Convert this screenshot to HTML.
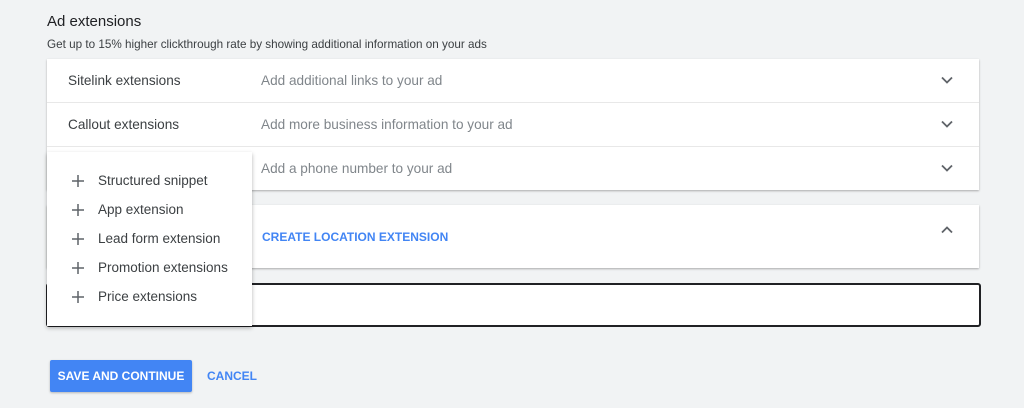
<!DOCTYPE html><html><head><style>
body{margin:0;width:1024px;height:408px;background:#f1f3f4;font-family:"Liberation Sans",sans-serif;position:relative;overflow:hidden}
.a{position:absolute}
.card{position:absolute;left:47px;width:932px;background:#fff;box-shadow:0 1px 2px rgba(0,0,0,.3)}
.row{position:absolute;left:0;width:932px;height:43px;border-bottom:1px solid #e8e8e8}
.l{position:absolute;left:21px;top:14px;font-size:13.6px;color:#3c4043}
.d{position:absolute;left:214px;top:14px;font-size:13.6px;color:#80868b}
.ch{position:absolute;left:894px;top:17px}
.mi{position:absolute;left:25px;font-size:13.5px;color:#3c4043}
.mi svg{position:absolute;left:-1px;top:1px}
.mi span{position:absolute;left:26px;white-space:nowrap}
</style></head><body>
<div class="a" style="left:47px;top:13px;font-size:15px;color:#202124">Ad extensions</div>
<div class="a" style="left:47px;top:38px;font-size:11.7px;color:#3c4043">Get up to 15% higher clickthrough rate by showing additional information on your ads</div>
<div class="card" style="top:59px;height:131px">
<div class="row" style="top:0"><div class="l">Sitelink extensions</div><div class="d">Add additional links to your ad</div><svg class="ch" width="12" height="8" viewBox="0 0 12 8"><path d="M1 1.5l5 5 5-5" fill="none" stroke="#5f6368" stroke-width="1.8"/></svg></div>
<div class="row" style="top:44px"><div class="l">Callout extensions</div><div class="d">Add more business information to your ad</div><svg class="ch" width="12" height="8" viewBox="0 0 12 8"><path d="M1 1.5l5 5 5-5" fill="none" stroke="#5f6368" stroke-width="1.8"/></svg></div>
<div class="row" style="top:88px;border:0"><div class="d">Add a phone number to your ad</div><svg class="ch" width="12" height="8" viewBox="0 0 12 8"><path d="M1 1.5l5 5 5-5" fill="none" stroke="#5f6368" stroke-width="1.8"/></svg></div>
</div>
<div class="card" style="top:205px;height:63px">
<div class="a" style="left:215px;top:25px;font-size:12px;font-weight:bold;color:#4285f4">CREATE LOCATION EXTENSION</div>
<svg class="a" style="left:894px;top:21px" width="12" height="8" viewBox="0 0 12 8"><path d="M1 6.5l5-5 5 5" fill="none" stroke="#5f6368" stroke-width="1.8"/></svg>
</div>
<div class="a" style="left:46px;top:283px;width:931px;height:40px;border:2px solid #202124;border-radius:3px;background:#fff"></div>
<div class="a" style="left:47px;top:152px;width:205px;height:174px;background:#fff;box-shadow:0 2px 4px rgba(0,0,0,.3)">
<div class="mi" style="top:21px"><svg width="14" height="14"><path d="M7 1v12M1 7h12" stroke="#5f6368" stroke-width="1.5"/></svg><span>Structured snippet</span></div>
<div class="mi" style="top:50px"><svg width="14" height="14"><path d="M7 1v12M1 7h12" stroke="#5f6368" stroke-width="1.5"/></svg><span>App extension</span></div>
<div class="mi" style="top:79px"><svg width="14" height="14"><path d="M7 1v12M1 7h12" stroke="#5f6368" stroke-width="1.5"/></svg><span>Lead form extension</span></div>
<div class="mi" style="top:108px"><svg width="14" height="14"><path d="M7 1v12M1 7h12" stroke="#5f6368" stroke-width="1.5"/></svg><span>Promotion extensions</span></div>
<div class="mi" style="top:137px"><svg width="14" height="14"><path d="M7 1v12M1 7h12" stroke="#5f6368" stroke-width="1.5"/></svg><span>Price extensions</span></div>
</div>
<div class="a" style="left:50px;top:360px;width:142px;height:32px;background:#4285f4;border-radius:2px;box-shadow:0 1px 2px rgba(0,0,0,.25);color:#fff;font-size:12px;font-weight:bold;line-height:32px;text-align:center">SAVE AND CONTINUE</div>
<div class="a" style="left:207px;top:369px;font-size:12px;font-weight:bold;color:#4285f4">CANCEL</div>
</body></html>
